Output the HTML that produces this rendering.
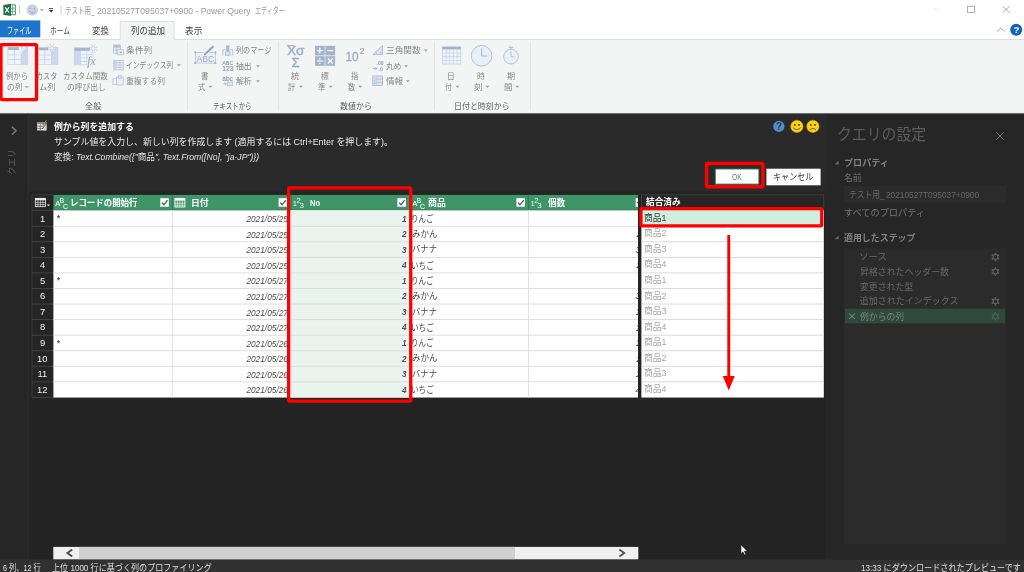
<!DOCTYPE html>
<html lang="ja">
<head>
<meta charset="utf-8">
<title>Power Query エディター</title>
<style>
html,body{margin:0;padding:0;}
body{width:1024px;height:572px;overflow:hidden;background:#242424;position:relative;font-family:"Liberation Sans","Noto Sans CJK JP",sans-serif;}
svg{position:absolute;left:0;top:0;filter:blur(0.3px);}
svg text{font-family:"Liberation Sans","Noto Sans CJK JP",sans-serif;}
.t{position:absolute;white-space:nowrap;line-height:20px;transform-origin:0 0;}
.clip{position:absolute;overflow:hidden;}
#txt{position:absolute;left:0;top:0;width:1024px;height:572px;filter:blur(0.3px);}
</style>
</head>
<body>
<svg id="base" width="1024" height="572" viewBox="0 0 1024 572">
<rect x="0" y="0" width="1024" height="39.5" fill="#ffffff"/>
<rect x="0" y="39" width="1024" height="74.4" fill="#f3f4f4"/>
<rect x="0" y="39" width="1024" height="1" fill="#dcdddd"/>
<rect x="0" y="112.6" width="1024" height="1" fill="#e4e5e5"/>
<rect x="0" y="20.4" width="40.3" height="17" fill="#1c74cb"/>
<path d="M120.2 40 V21.5 H174 V40" fill="#f3f4f4" stroke="#dcdddd" stroke-width="1"/>
<rect x="120.7" y="39" width="52.8" height="1.6" fill="#f3f4f4"/>
<g><rect x="8.5" y="4.8" width="7" height="10" fill="#eef6f1" stroke="#3f8a60" stroke-width="0.8"/><path d="M9 8.2H15.5M9 11.4H15.5M12.6 5V15" stroke="#4f9670" stroke-width="0.7"/><path d="M3.4 5 L11 3.7 V16 L3.4 14.7Z" fill="#1e7145"/><path d="M5.2 7.3 L9 12.5 M9 7.3 L5.2 12.5" stroke="#fff" stroke-width="1.2"/></g>
<rect x="19.2" y="5" width="0.8" height="9.5" fill="#c4c4c4"/>
<circle cx="32.3" cy="10" r="5.7" fill="#c5d3e8"/><circle cx="30.3" cy="8.3" r="0.75" fill="#8ea3c8"/><circle cx="34.3" cy="8.3" r="0.75" fill="#8ea3c8"/><path d="M28.9 10.9 Q32.3 15.2 35.7 10.9" stroke="#8ea3c8" stroke-width="0.9" fill="none"/>
<path d="M40 9 h3.4 l-1.7 1.9z" fill="#9a9a9a"/>
<rect x="49" y="8.2" width="4.2" height="0.9" fill="#333"/><path d="M48.9 10 h4.4 l-2.2 2.4z" fill="#333"/>
<rect x="60.7" y="5" width="0.8" height="9.5" fill="#c4c4c4"/>
<rect x="933.3" y="8.8" width="6.8" height="0.8" fill="#e6e6e6"/>
<rect x="967.5" y="6.3" width="7" height="6.2" fill="none" stroke="#a8a8a8" stroke-width="0.9"/>
<path d="M1002.5 6 L1009.8 12.8 M1009.8 6 L1002.5 12.8" stroke="#a8a8a8" stroke-width="0.9"/>
<path d="M997 31.6 L1000.8 28.2 L1004.6 31.6" stroke="#a0a0a0" stroke-width="0.9" fill="none"/>
<circle cx="1016.2" cy="29.7" r="6" fill="#0f64b6"/>
<text x="1016.3" y="33.2" font-size="9.5" font-weight="bold" fill="#fff" text-anchor="middle">?</text>
<rect x="187.1" y="41.5" width="0.9" height="69" fill="#e2e3e4"/>
<rect x="278.20000000000005" y="41.5" width="0.9" height="69" fill="#e2e3e4"/>
<rect x="433.90000000000003" y="41.5" width="0.9" height="69" fill="#e2e3e4"/>
<rect x="530.0" y="41.5" width="0.9" height="69" fill="#e2e3e4"/>
<rect x="7.9" y="47" width="19.9" height="17.4" fill="#eef3fa"/><rect x="21.17" y="47" width="6.63" height="17.4" fill="#cbd7ea"/><rect x="7.9" y="47" width="11" height="3.0" fill="#a4b3ce"/><rect x="14.13" y="50.0" width="0.8" height="14.399999999999999" fill="#c6d3e7"/><rect x="20.77" y="50.0" width="0.8" height="14.399999999999999" fill="#c6d3e7"/><rect x="7.90" y="54.40" width="13.27" height="0.8" fill="#c6d3e7"/><rect x="7.90" y="59.20" width="13.27" height="0.8" fill="#c6d3e7"/><rect x="7.9" y="47" width="19.9" height="17.4" fill="none" stroke="#c6d3e7" stroke-width="0.7"/>
<path d="M17.6 56.4 L24.6 46.6" stroke="#f3f4f4" stroke-width="2.4"/><path d="M17.8 56 L24.2 47.2" stroke="#dfe6f2" stroke-width="1"/>
<rect x="38.3" y="47.3" width="19.5" height="17.1" fill="#eef3fa"/><rect x="51.30" y="47.3" width="6.50" height="17.1" fill="#cbd7ea"/><rect x="38.3" y="47.3" width="10" height="3.0" fill="#a4b3ce"/><rect x="44.40" y="50.3" width="0.8" height="14.100000000000001" fill="#c6d3e7"/><rect x="50.90" y="50.3" width="0.8" height="14.100000000000001" fill="#c6d3e7"/><rect x="38.30" y="54.60" width="13.00" height="0.8" fill="#c6d3e7"/><rect x="38.30" y="59.30" width="13.00" height="0.8" fill="#c6d3e7"/><rect x="38.3" y="47.3" width="19.5" height="17.1" fill="none" stroke="#c6d3e7" stroke-width="0.7"/>
<circle cx="51.8" cy="48.2" r="3.2" fill="#f3f4f4" opacity="0.8"/><path d="M53.00 48.70 L56.05 49.96" stroke="#c3cfe4" stroke-width="0.8"/><path d="M52.30 49.40 L53.56 52.45" stroke="#c3cfe4" stroke-width="0.8"/><path d="M51.30 49.40 L50.04 52.45" stroke="#c3cfe4" stroke-width="0.8"/><path d="M50.60 48.70 L47.55 49.96" stroke="#c3cfe4" stroke-width="0.8"/><path d="M50.60 47.70 L47.55 46.44" stroke="#c3cfe4" stroke-width="0.8"/><path d="M51.30 47.00 L50.04 43.95" stroke="#c3cfe4" stroke-width="0.8"/><path d="M52.30 47.00 L53.56 43.95" stroke="#c3cfe4" stroke-width="0.8"/><path d="M53.00 47.70 L56.05 46.44" stroke="#c3cfe4" stroke-width="0.8"/><circle cx="51.8" cy="48.2" r="1.6" fill="#f3f4f4" stroke="#c3cfe4" stroke-width="0.5"/>
<rect x="74.2" y="47.8" width="18.8" height="17.1" fill="#eef3fa"/><rect x="74.20" y="47.8" width="6.27" height="17.1" fill="#cbd7ea"/><rect x="74.2" y="47.8" width="16" height="3.0" fill="#a4b3ce"/><rect x="80.07" y="50.8" width="0.8" height="14.100000000000001" fill="#c6d3e7"/><rect x="86.33" y="50.8" width="0.8" height="14.100000000000001" fill="#c6d3e7"/><rect x="80.47" y="53.92" width="12.53" height="0.8" fill="#c6d3e7"/><rect x="80.47" y="57.45" width="12.53" height="0.8" fill="#c6d3e7"/><rect x="80.47" y="60.98" width="12.53" height="0.8" fill="#c6d3e7"/><rect x="74.2" y="47.8" width="18.8" height="17.1" fill="none" stroke="#c6d3e7" stroke-width="0.7"/>
<circle cx="93.3" cy="48.6" r="3.2" fill="#f3f4f4" opacity="0.8"/><path d="M94.50 49.10 L97.55 50.36" stroke="#c3cfe4" stroke-width="0.8"/><path d="M93.80 49.80 L95.06 52.85" stroke="#c3cfe4" stroke-width="0.8"/><path d="M92.80 49.80 L91.54 52.85" stroke="#c3cfe4" stroke-width="0.8"/><path d="M92.10 49.10 L89.05 50.36" stroke="#c3cfe4" stroke-width="0.8"/><path d="M92.10 48.10 L89.05 46.84" stroke="#c3cfe4" stroke-width="0.8"/><path d="M92.80 47.40 L91.54 44.35" stroke="#c3cfe4" stroke-width="0.8"/><path d="M93.80 47.40 L95.06 44.35" stroke="#c3cfe4" stroke-width="0.8"/><path d="M94.50 48.10 L97.55 46.84" stroke="#c3cfe4" stroke-width="0.8"/><circle cx="93.3" cy="48.6" r="1.6" fill="#f3f4f4" stroke="#c3cfe4" stroke-width="0.5"/>
<text x="87.3" y="64.5" font-size="11.5" font-style="italic" fill="#f3f4f4" stroke="#f3f4f4" stroke-width="1.6" style="font-family:'Liberation Serif',serif">fx</text>
<text x="87.3" y="64.5" font-size="11.5" font-style="italic" fill="#8e9dba" style="font-family:'Liberation Serif',serif">fx</text>
<g fill="none" stroke="#b3c0d8" stroke-width="0.8"><rect x="113.6" y="45" width="6.8" height="8.6" fill="#eaf0f8"/><rect x="113.6" y="45" width="6.8" height="2" fill="#b3c0d8" stroke="none"/><path d="M113.6 47.4h6.8M113.6 50.2h6.8M116.4 45v8.6"/><rect x="117.8" y="49.8" width="5.6" height="5" fill="#f3f4f4"/><rect x="119.6" y="51.6" width="2" height="1.6" fill="#8fa0bf" stroke="none"/></g>
<g fill="none" stroke="#b3c0d8" stroke-width="0.7"><rect x="113.6" y="60.3" width="9.6" height="9.6" fill="#eaf0f8"/><path d="M116.6 60.3v9.6M116.6 62.7h6.6M116.6 65.1h6.6M116.6 67.5h6.6M119.9 60.3v9.6"/><rect x="113.6" y="60.3" width="3" height="9.6" fill="#d3dcec" stroke="none"/><path d="M115.1 61v8.4" stroke="#9fb0cd" stroke-width="0.8" stroke-dasharray="0.9 0.9"/></g>
<g fill="none" stroke="#b3c0d8" stroke-width="0.8"><rect x="113" y="78.8" width="5.4" height="5.8" fill="#f3f4f4"/><rect x="116.6" y="77" width="6.6" height="8" fill="#eaf0f8"/><rect x="118.6" y="75.6" width="2.6" height="2.8" fill="#d3dcec" stroke-width="0.6"/></g>
<path d="M24.80 86.20 h4.0 l-2.0 2.1z" fill="#a2a2a2"/>
<path d="M176.90 64.30 h4.0 l-2.0 2.1z" fill="#a2a2a2"/>
<rect x="195.2" y="52.3" width="20.2" height="10.8" fill="#e9eff8" stroke="#a9b8d3" stroke-width="0.6"/>
<rect x="194.29999999999998" y="51.4" width="1.8" height="1.8" fill="#9fb0cd"/>
<rect x="214.5" y="51.4" width="1.8" height="1.8" fill="#9fb0cd"/>
<rect x="194.29999999999998" y="62.2" width="1.8" height="1.8" fill="#9fb0cd"/>
<rect x="214.5" y="62.2" width="1.8" height="1.8" fill="#9fb0cd"/>
<text x="205.3" y="61.6" font-size="9.4" fill="#9dadc9" text-anchor="middle" textLength="17.6" lengthAdjust="spacingAndGlyphs">ABC</text>
<path d="M204.6 54.6 L213.4 46.2" stroke="#f3f4f4" stroke-width="3.6"/><path d="M205 54.2 L213.4 46.2" stroke="#93a3c1" stroke-width="2.1"/><path d="M203.6 55.6 l0.8 -2 l1.3 1.3z" fill="#7f90b0"/>
<path d="M208.40 85.80 h4.0 l-2.0 2.1z" fill="#a2a2a2"/>
<g fill="none" stroke="#a9b8d3" stroke-width="0.8"><path d="M222.9 55.4v-5.6h2.6M232.8 55.4v-5.6h-2.6"/><rect x="226.2" y="45.4" width="3.2" height="6" fill="#a9b8d3" stroke="none"/><rect x="225.6" y="51.7" width="4.4" height="3.6" fill="#dbe4f1"/></g>
<text x="227.8" y="64.6" font-size="5.4" fill="#8b9cbb" text-anchor="middle" stroke="#8b9cbb" stroke-width="0.15">ABC</text><text x="227.8" y="70.9" font-size="6.8" fill="#8b9cbb" text-anchor="middle" stroke="#8b9cbb" stroke-width="0.15">123</text>
<text x="227.6" y="80.8" font-size="6.6" fill="#8b9cbb" text-anchor="middle" stroke="#8b9cbb" stroke-width="0.15">abc</text><path d="M223 83.8h3.2m-1.3-1.3l1.3 1.3l-1.3 1.3" stroke="#8b9cbb" stroke-width="0.7" fill="none"/><rect x="227.4" y="82" width="5.4" height="3.8" fill="#dbe4f1" stroke="#a9b8d3" stroke-width="0.6"/>
<path d="M256.00 65.30 h4.0 l-2.0 2.1z" fill="#a2a2a2"/>
<path d="M256.00 80.30 h4.0 l-2.0 2.1z" fill="#a2a2a2"/>
<text x="295.8" y="54.7" font-size="12" fill="#9aaac7" stroke="#9aaac7" stroke-width="0.35" text-anchor="middle" textLength="17.4" lengthAdjust="spacingAndGlyphs">Xσ</text><rect x="286.8" y="45.2" width="7.6" height="0.9" fill="#9aaac7"/>
<text x="295.5" y="66.5" font-size="13" fill="#9aaac7" stroke="#9aaac7" stroke-width="0.35" text-anchor="middle">Σ</text>
<path d="M299.00 85.80 h4.0 l-2.0 2.1z" fill="#a2a2a2"/>
<rect x="315" y="45.8" width="9.7" height="9.6" fill="#a3b2ce"/>
<path d="M316.85 50.599999999999994h6M319.85 47.599999999999994v6" stroke="#fff" stroke-width="1.2"/>
<rect x="325.4" y="45.8" width="9.7" height="9.6" fill="#a3b2ce"/>
<path d="M327.25 50.599999999999994h6" stroke="#fff" stroke-width="1.2"/>
<rect x="315" y="56.2" width="9.7" height="9.6" fill="#a3b2ce"/>
<path d="M316.85 61.0h6" stroke="#fff" stroke-width="1.1"/><circle cx="319.85" cy="58.8" r="0.8" fill="#fff"/><circle cx="319.85" cy="63.2" r="0.8" fill="#fff"/>
<rect x="325.4" y="56.2" width="9.7" height="9.6" fill="#a3b2ce"/>
<path d="M327.75 58.5l5 5M332.75 58.5l-5 5" stroke="#fff" stroke-width="1.1"/>
<path d="M328.80 85.80 h4.0 l-2.0 2.1z" fill="#a2a2a2"/>
<text x="345.6" y="61.3" font-size="12.6" fill="#9aaac7" stroke="#9aaac7" stroke-width="0.3" textLength="13" lengthAdjust="spacingAndGlyphs">10</text><text x="359.8" y="54.2" font-size="8.6" fill="#9aaac7" stroke="#9aaac7" stroke-width="0.2">2</text>
<path d="M358.20 85.80 h4.0 l-2.0 2.1z" fill="#a2a2a2"/>
<path d="M373 54.6 L382.4 45.6 V54.6Z" fill="#dbe4f1" stroke="#a8b5cd" stroke-width="0.8"/><path d="M377 54.6a4 4 0 0 0 -1.4 -2.6" stroke="#a8b5cd" stroke-width="0.6" fill="none"/><rect x="380" y="52.3" width="2.3" height="2.3" fill="none" stroke="#a8b5cd" stroke-width="0.5"/>
<text x="376.6" y="65.4" font-size="5" font-weight="bold" fill="#8c9dbd">.00</text><text x="378.6" y="70.6" font-size="5" font-weight="bold" fill="#8c9dbd">.0</text><path d="M372.8 68.6h4m-1.5-1.5l1.5 1.5l-1.5 1.5" stroke="#8c9dbd" stroke-width="0.7" fill="none"/>
<g fill="none" stroke="#a8b5cd" stroke-width="0.8"><rect x="372.6" y="76" width="9.8" height="9.4" fill="#dbe4f1"/><path d="M375.8 76v9.4M375.8 79.1h6.6M375.8 82.3h6.6"/><rect x="372.6" y="76" width="3.2" height="9.4" fill="#d3dcec" stroke="none"/><path d="M374.2 77.2v7.4" stroke="#9fb0cd" stroke-width="0.8" stroke-dasharray="1.4 1.4"/></g>
<path d="M423.80 49.60 h4.0 l-2.0 2.1z" fill="#a2a2a2"/>
<path d="M404.00 65.30 h4.0 l-2.0 2.1z" fill="#a2a2a2"/>
<path d="M405.80 80.30 h4.0 l-2.0 2.1z" fill="#a2a2a2"/>
<rect x="442.4" y="46.8" width="18.4" height="17.2" fill="#f0f4fa" stroke="#bccae2" stroke-width="0.7"/><rect x="442.4" y="46.8" width="18.4" height="2.6" fill="#a4b3ce"/>
<rect x="445.73" y="49.4" width="0.7" height="14.6" fill="#c3d0e6"/>
<rect x="449.41" y="49.4" width="0.7" height="14.6" fill="#c3d0e6"/>
<rect x="453.09" y="49.4" width="0.7" height="14.6" fill="#c3d0e6"/>
<rect x="456.77" y="49.4" width="0.7" height="14.6" fill="#c3d0e6"/>
<rect x="442.4" y="52.70" width="18.4" height="0.7" fill="#c3d0e6"/>
<rect x="442.4" y="56.35" width="18.4" height="0.7" fill="#c3d0e6"/>
<rect x="442.4" y="60.00" width="18.4" height="0.7" fill="#c3d0e6"/>
<path d="M455.50 85.80 h4.0 l-2.0 2.1z" fill="#a2a2a2"/>
<circle cx="481.6" cy="55.8" r="10.3" fill="#e8eff9" stroke="#a8b5cd" stroke-width="0.8"/><path d="M481.6 48.6 V56 H487.2" fill="none" stroke="#a8b5cd" stroke-width="1"/>
<path d="M485.40 85.80 h4.0 l-2.0 2.1z" fill="#a2a2a2"/>
<circle cx="511" cy="56.6" r="7.4" fill="#e8eff9" stroke="#a8b5cd" stroke-width="0.8"/><path d="M511 51.4 V56.8 H514.4" fill="none" stroke="#a8b5cd" stroke-width="0.8"/><path d="M508.6 47.2h4.8M511 47.2v2" stroke="#a8b5cd" stroke-width="1.1"/>
<path d="M515.20 85.80 h4.0 l-2.0 2.1z" fill="#a2a2a2"/>
<rect x="0" y="113.5" width="28" height="446" fill="#262626"/>
<rect x="28" y="113.5" width="799" height="78.1" fill="#2a2a2a"/>
<rect x="27.6" y="113.5" width="0.9" height="446" fill="#313131"/>
<path d="M12 126.9 L16 130.7 L12 134.5" stroke="#7a7a7a" stroke-width="1.5" fill="none"/>
<text transform="translate(15.3 175.2) rotate(-90)" font-size="9.4" fill="#606060" textLength="25.8" lengthAdjust="spacingAndGlyphs">クエリ</text>
<rect x="37.2" y="122" width="9.2" height="8.4" fill="#f2f2f2"/><rect x="37.2" y="122" width="9.2" height="2" fill="#8a8a8a"/><path d="M40.2 124v6.4M37.2 126.2h6M37.2 128.4h6" stroke="#555" stroke-width="0.7"/><rect x="43.2" y="124" width="3.2" height="6.4" fill="#c9d6ea"/>
<path d="M45.9 120.3 l-3.4 4.6 h1.9 l-1.9 3.9 l4.3 -5.3 h-2 l2.1 -3.2z" fill="#f3b04a" stroke="#262626" stroke-width="0.4"/>
<circle cx="778.9" cy="126.4" r="5.6" fill="#558ec6"/><text x="778.9" y="130.2" font-size="10.4" font-weight="bold" fill="#1f3a5e" text-anchor="middle">?</text>
<circle cx="796.9" cy="126.4" r="6.2" fill="#fbd017" stroke="#c9a40c" stroke-width="0.5"/><rect x="794" y="124" width="1.6" height="1.8" fill="#5a4700"/><rect x="798.2" y="124" width="1.6" height="1.8" fill="#5a4700"/><path d="M793.2 127.6 Q796.9 131.6 800.6 127.6" stroke="#6a5500" stroke-width="0.9" fill="none"/>
<circle cx="812.9" cy="126.4" r="6.2" fill="#fbd017" stroke="#c9a40c" stroke-width="0.5"/><rect x="810" y="124" width="1.6" height="1.8" fill="#5a4700"/><rect x="814.2" y="124" width="1.6" height="1.8" fill="#5a4700"/><path d="M809.8 130 Q812.9 126.8 816 130" stroke="#6a5500" stroke-width="0.9" fill="none"/>
<rect x="715.3" y="169" width="43.6" height="15.1" fill="#fff" stroke="#347a54" stroke-width="0.9"/>
<rect x="766.4" y="168.7" width="54.2" height="16.6" fill="#fff"/>
<rect x="32" y="194.9" width="21.4" height="202.65" fill="#252525"/>
<rect x="31.6" y="194.9" width="0.8" height="202.65" fill="#404040"/>
<rect x="31.6" y="194.5" width="21.799999999999997" height="0.8" fill="#404040"/>
<rect x="32" y="225.81" width="21.4" height="0.8" fill="#484848"/>
<rect x="32" y="241.38" width="21.4" height="0.8" fill="#484848"/>
<rect x="32" y="256.95" width="21.4" height="0.8" fill="#484848"/>
<rect x="32" y="272.51" width="21.4" height="0.8" fill="#484848"/>
<rect x="32" y="288.08" width="21.4" height="0.8" fill="#484848"/>
<rect x="32" y="303.64" width="21.4" height="0.8" fill="#484848"/>
<rect x="32" y="319.21" width="21.4" height="0.8" fill="#484848"/>
<rect x="32" y="334.77" width="21.4" height="0.8" fill="#484848"/>
<rect x="32" y="350.34" width="21.4" height="0.8" fill="#484848"/>
<rect x="32" y="365.90" width="21.4" height="0.8" fill="#484848"/>
<rect x="32" y="381.47" width="21.4" height="0.8" fill="#484848"/>
<rect x="32" y="397.03" width="21.4" height="0.8" fill="#484848"/>
<rect x="32" y="209.90" width="21.4" height="0.8" fill="#484848"/>
<rect x="35.3" y="198.3" width="10.2" height="8.4" fill="none" stroke="#f0f0f0" stroke-width="0.8"/><rect x="35.3" y="198.3" width="10.2" height="2" fill="#f0f0f0"/><path d="M35.3 202.5h10.2M35.3 204.6h10.2M37.9 198.3v8.4M40.4 198.3v8.4M42.9 198.3v8.4" stroke="#f0f0f0" stroke-width="0.6"/>
<path d="M46.8 204.4 h3.2 l-1.6 1.9z" fill="#f0f0f0"/>
<rect x="53.4" y="194.9" width="584.6" height="15.400000000000006" fill="#3f9568"/>
<rect x="171.8" y="194.9" width="1" height="15.400000000000006" fill="#2f7a53"/>
<rect x="290.7" y="194.9" width="1" height="15.400000000000006" fill="#2f7a53"/>
<rect x="410.5" y="194.9" width="1" height="15.400000000000006" fill="#2f7a53"/>
<rect x="527.9" y="194.9" width="1" height="15.400000000000006" fill="#2f7a53"/>
<rect x="53.4" y="209.4" width="584.6" height="0.9" fill="#37855d"/>
<rect x="53.4" y="210.3" width="584.6" height="187.25" fill="#ffffff"/>
<rect x="291.2" y="210.3" width="119.80000000000001" height="187.25" fill="#e8f4ed"/>
<rect x="53.4" y="225.77" width="584.6" height="0.9" fill="#dadada"/>
<rect x="53.4" y="241.33" width="584.6" height="0.9" fill="#dadada"/>
<rect x="53.4" y="256.90" width="584.6" height="0.9" fill="#dadada"/>
<rect x="53.4" y="272.46" width="584.6" height="0.9" fill="#dadada"/>
<rect x="53.4" y="288.03" width="584.6" height="0.9" fill="#dadada"/>
<rect x="53.4" y="303.59" width="584.6" height="0.9" fill="#dadada"/>
<rect x="53.4" y="319.16" width="584.6" height="0.9" fill="#dadada"/>
<rect x="53.4" y="334.72" width="584.6" height="0.9" fill="#dadada"/>
<rect x="53.4" y="350.29" width="584.6" height="0.9" fill="#dadada"/>
<rect x="53.4" y="365.85" width="584.6" height="0.9" fill="#dadada"/>
<rect x="53.4" y="381.42" width="584.6" height="0.9" fill="#dadada"/>
<rect x="171.85000000000002" y="210.3" width="0.9" height="187.25" fill="#dedede"/>
<rect x="290.75" y="210.3" width="0.9" height="187.25" fill="#dedede"/>
<rect x="410.55" y="210.3" width="0.9" height="187.25" fill="#dedede"/>
<rect x="527.9499999999999" y="210.3" width="0.9" height="187.25" fill="#dedede"/>
<rect x="160.3" y="198.2" width="8.5" height="8.5" fill="#fff"/><path d="M161.9 202.6 l2 2.2 l3.6 -4.6" stroke="#555" stroke-width="1.3" fill="none"/>
<rect x="278.6" y="198.2" width="8.5" height="8.5" fill="#fff"/><path d="M280.20000000000005 202.6 l2 2.2 l3.6 -4.6" stroke="#555" stroke-width="1.3" fill="none"/>
<rect x="397.4" y="198.2" width="8.5" height="8.5" fill="#fff"/><path d="M399.0 202.6 l2 2.2 l3.6 -4.6" stroke="#555" stroke-width="1.3" fill="none"/>
<rect x="516.4" y="198.2" width="8.5" height="8.5" fill="#fff"/><path d="M518.0 202.6 l2 2.2 l3.6 -4.6" stroke="#555" stroke-width="1.3" fill="none"/>
<rect x="635.6" y="198.2" width="2.4" height="8.5" fill="#fff"/><rect x="636.8000000000001" y="201.8" width="1.2" height="1.4" fill="#555"/>
<text x="55.2" y="206.2" font-size="7.6" fill="#f2f9f5" stroke="#f2f9f5" stroke-width="0.12">A</text><text x="59.800000000000004" y="203.2" font-size="6.4" fill="#f2f9f5" stroke="#f2f9f5" stroke-width="0.12">B</text><text x="63.1" y="208.6" font-size="6.8" fill="#f2f9f5" stroke="#f2f9f5" stroke-width="0.12">C</text>
<text x="412.2" y="206.2" font-size="7.6" fill="#f2f9f5" stroke="#f2f9f5" stroke-width="0.12">A</text><text x="416.8" y="203.2" font-size="6.4" fill="#f2f9f5" stroke="#f2f9f5" stroke-width="0.12">B</text><text x="420.09999999999997" y="208.6" font-size="6.8" fill="#f2f9f5" stroke="#f2f9f5" stroke-width="0.12">C</text>
<text x="292.8" y="205.9" font-size="7.8" fill="#e6f2eb">1</text><text x="296.4" y="202.9" font-size="7.6" fill="#e6f2eb">2</text><text x="299.4" y="207.9" font-size="8" fill="#e6f2eb">3</text>
<text x="530.6" y="205.9" font-size="7.8" fill="#e6f2eb">1</text><text x="534.2" y="202.9" font-size="7.6" fill="#e6f2eb">2</text><text x="537.2" y="207.9" font-size="8" fill="#e6f2eb">3</text>
<rect x="174.9" y="198.4" width="10" height="8.6" fill="none" stroke="#fff" stroke-width="0.9"/><rect x="174.9" y="198.4" width="10" height="2.2" fill="#fff"/><path d="M174.9 203.2h10M174.9 205.2h10M177.4 200v7M179.9 200v7M182.4 200v7" stroke="#fff" stroke-width="0.6"/>
<rect x="641.4" y="194.9" width="182.39999999999998" height="14.400000000000006" fill="#262626" stroke="#454545" stroke-width="0.8"/>
<rect x="641.4" y="210.3" width="182.40" height="187.25" fill="#ffffff"/>
<rect x="641.4" y="210.3" width="182.40" height="15.91" fill="#d0eedf"/>
<rect x="641.4" y="225.77" width="182.40" height="0.9" fill="#d6d6d6"/>
<rect x="641.4" y="241.33" width="182.40" height="0.9" fill="#d6d6d6"/>
<rect x="641.4" y="256.90" width="182.40" height="0.9" fill="#d6d6d6"/>
<rect x="641.4" y="272.46" width="182.40" height="0.9" fill="#d6d6d6"/>
<rect x="641.4" y="288.03" width="182.40" height="0.9" fill="#d6d6d6"/>
<rect x="641.4" y="303.59" width="182.40" height="0.9" fill="#d6d6d6"/>
<rect x="641.4" y="319.16" width="182.40" height="0.9" fill="#d6d6d6"/>
<rect x="641.4" y="334.72" width="182.40" height="0.9" fill="#d6d6d6"/>
<rect x="641.4" y="350.29" width="182.40" height="0.9" fill="#d6d6d6"/>
<rect x="641.4" y="365.85" width="182.40" height="0.9" fill="#d6d6d6"/>
<rect x="641.4" y="381.42" width="182.40" height="0.9" fill="#d6d6d6"/>
<rect x="53.3" y="546.9" width="585" height="12.7" fill="#f0f0f0"/>
<rect x="79" y="546.9" width="436" height="12.7" fill="#d0d0d0"/>
<path d="M72.2 549.6 L67.4 553.1 L72.2 556.6" stroke="#4a4a4a" stroke-width="1.9" fill="none"/>
<path d="M619.4 549.6 L624.2 553.1 L619.4 556.6" stroke="#555" stroke-width="1.9" fill="none"/>
<rect x="0" y="559.5" width="1024" height="12.5" fill="#313131"/>
<rect x="826.8" y="113.5" width="197.2" height="445.8" fill="#262626"/><rect x="826.4" y="191.6" width="0.9" height="367.7" fill="#2c2c2c"/>
<path d="M996.2 132.3 L1003.8 139.8 M1003.8 132.3 L996.2 139.8" stroke="#7c7c7c" stroke-width="0.9"/>
<path d="M838.6 160.6 v3.8 h-3.8z" fill="#6a6a6a"/>
<path d="M838.6 235.4 v3.8 h-3.8z" fill="#6a6a6a"/>
<rect x="843.6" y="185.6" width="162.6" height="17" fill="#2b2b2b"/>
<rect x="843.6" y="248.4" width="162.6" height="295.6" fill="#2b2b2b"/>
<rect x="845" y="308.7" width="160.2" height="14.6" fill="#2f4a3c"/>
<path d="M849 313.4 L855 319 M855 313.4 L849 319" stroke="#8a938e" stroke-width="0.9"/>
<circle cx="995.4" cy="256.9" r="2.4" fill="none" stroke="#626262" stroke-width="1.1"/><path d="M997.74 258.25 L999.04 259.00" stroke="#626262" stroke-width="1.5"/><path d="M995.40 259.60 L995.40 261.10" stroke="#626262" stroke-width="1.5"/><path d="M993.06 258.25 L991.76 259.00" stroke="#626262" stroke-width="1.5"/><path d="M993.06 255.55 L991.76 254.80" stroke="#626262" stroke-width="1.5"/><path d="M995.40 254.20 L995.40 252.70" stroke="#626262" stroke-width="1.5"/><path d="M997.74 255.55 L999.04 254.80" stroke="#626262" stroke-width="1.5"/>
<circle cx="995.4" cy="271.6" r="2.4" fill="none" stroke="#626262" stroke-width="1.1"/><path d="M997.74 272.95 L999.04 273.70" stroke="#626262" stroke-width="1.5"/><path d="M995.40 274.30 L995.40 275.80" stroke="#626262" stroke-width="1.5"/><path d="M993.06 272.95 L991.76 273.70" stroke="#626262" stroke-width="1.5"/><path d="M993.06 270.25 L991.76 269.50" stroke="#626262" stroke-width="1.5"/><path d="M995.40 268.90 L995.40 267.40" stroke="#626262" stroke-width="1.5"/><path d="M997.74 270.25 L999.04 269.50" stroke="#626262" stroke-width="1.5"/>
<circle cx="995.4" cy="301.3" r="2.4" fill="none" stroke="#626262" stroke-width="1.1"/><path d="M997.74 302.65 L999.04 303.40" stroke="#626262" stroke-width="1.5"/><path d="M995.40 304.00 L995.40 305.50" stroke="#626262" stroke-width="1.5"/><path d="M993.06 302.65 L991.76 303.40" stroke="#626262" stroke-width="1.5"/><path d="M993.06 299.95 L991.76 299.20" stroke="#626262" stroke-width="1.5"/><path d="M995.40 298.60 L995.40 297.10" stroke="#626262" stroke-width="1.5"/><path d="M997.74 299.95 L999.04 299.20" stroke="#626262" stroke-width="1.5"/>
<circle cx="995.4" cy="316.3" r="2.4" fill="none" stroke="#4d6055" stroke-width="1.1"/><path d="M997.74 317.65 L999.04 318.40" stroke="#4d6055" stroke-width="1.5"/><path d="M995.40 319.00 L995.40 320.50" stroke="#4d6055" stroke-width="1.5"/><path d="M993.06 317.65 L991.76 318.40" stroke="#4d6055" stroke-width="1.5"/><path d="M993.06 314.95 L991.76 314.20" stroke="#4d6055" stroke-width="1.5"/><path d="M995.40 313.60 L995.40 312.10" stroke="#4d6055" stroke-width="1.5"/><path d="M997.74 314.95 L999.04 314.20" stroke="#4d6055" stroke-width="1.5"/>
</svg>
<div id="txt">
<div class="t" style="left:65.40px;top:1.00px;color:#9a9a9a;font-size:9.4px;transform:scaleX(0.695);">テスト用_</div>
<div class="t" style="left:96.60px;top:1.00px;color:#9a9a9a;font-size:9.4px;transform:scaleX(0.914);">20210527T095037+0900 - Power Query</div>
<div class="t" style="left:254.50px;top:1.00px;color:#9a9a9a;font-size:9.4px;transform:scaleX(0.650);">エディター</div>
<div class="t" style="left:6.85px;top:20.80px;color:#ffffff;font-size:9.4px;transform:scaleX(0.649);">ファイル</div>
<div class="t" style="left:50.30px;top:20.80px;color:#444;font-size:9.4px;transform:scaleX(0.721);">ホーム</div>
<div class="t" style="left:91.90px;top:21.30px;color:#444;font-size:9.4px;transform:scaleX(0.895);">変換</div>
<div class="t" style="left:130.50px;top:21.30px;color:#444;font-size:9.4px;transform:scaleX(0.905);">列の追加</div>
<div class="t" style="left:185.00px;top:21.30px;color:#444;font-size:9.4px;transform:scaleX(0.926);">表示</div>
<div class="t" style="left:6.40px;top:66.00px;color:#888888;font-size:8.5px;transform:scaleX(0.864);">例から</div>
<div class="t" style="left:6.70px;top:77.40px;color:#888888;font-size:8.5px;transform:scaleX(0.900);">の列</div>
<div class="t" style="left:35.66px;top:65.50px;color:#888888;font-size:8.5px;transform:scaleX(0.838);">カスタ</div>
<div class="t" style="left:38.70px;top:77.40px;color:#888888;font-size:8.5px;transform:scaleX(0.971);">ム列</div>
<div class="t" style="left:62.93px;top:66.00px;color:#888888;font-size:8.5px;transform:scaleX(0.874);">カスタム関数</div>
<div class="t" style="left:67.00px;top:77.40px;color:#888888;font-size:8.5px;transform:scaleX(0.912);">の呼び出し</div>
<div class="t" style="left:84.60px;top:96.00px;color:#5e5e5e;font-size:8.5px;transform:scaleX(0.965);">全般</div>
<div class="t" style="left:126.00px;top:39.90px;color:#888888;font-size:8.5px;transform:scaleX(1.028);">条件列</div>
<div class="t" style="left:126.00px;top:55.00px;color:#888888;font-size:8.5px;transform:scaleX(0.797);">インデックス列</div>
<div class="t" style="left:126.00px;top:71.00px;color:#888888;font-size:8.5px;transform:scaleX(0.919);">重複する列</div>
<div class="t" style="left:201.20px;top:66.00px;color:#888888;font-size:8.5px;transform:scaleX(0.878);">書</div>
<div class="t" style="left:197.90px;top:77.40px;color:#888888;font-size:8.5px;transform:scaleX(0.878);">式</div>
<div class="t" style="left:236.00px;top:40.30px;color:#888888;font-size:8.5px;transform:scaleX(0.833);">列のマージ</div>
<div class="t" style="left:236.00px;top:56.00px;color:#888888;font-size:8.5px;transform:scaleX(0.924);">抽出</div>
<div class="t" style="left:236.00px;top:71.00px;color:#888888;font-size:8.5px;transform:scaleX(0.924);">解析</div>
<div class="t" style="left:213.00px;top:95.80px;color:#5e5e5e;font-size:8.5px;transform:scaleX(0.760);">テキストから</div>
<div class="t" style="left:291.00px;top:66.00px;color:#888888;font-size:8.5px;transform:scaleX(0.967);">統</div>
<div class="t" style="left:287.80px;top:77.40px;color:#888888;font-size:8.5px;transform:scaleX(0.844);">計</div>
<div class="t" style="left:321.20px;top:66.00px;color:#888888;font-size:8.5px;transform:scaleX(0.911);">標</div>
<div class="t" style="left:317.90px;top:77.40px;color:#888888;font-size:8.5px;transform:scaleX(0.878);">準</div>
<div class="t" style="left:350.90px;top:66.00px;color:#888888;font-size:8.5px;transform:scaleX(0.878);">指</div>
<div class="t" style="left:348.00px;top:77.40px;color:#888888;font-size:8.5px;transform:scaleX(0.844);">数</div>
<div class="t" style="left:385.70px;top:40.30px;color:#888888;font-size:8.5px;transform:scaleX(1.021);">三角関数</div>
<div class="t" style="left:385.70px;top:56.00px;color:#888888;font-size:8.5px;transform:scaleX(0.900);">丸め</div>
<div class="t" style="left:385.70px;top:71.00px;color:#888888;font-size:8.5px;transform:scaleX(1.012);">情報</div>
<div class="t" style="left:340.00px;top:96.00px;color:#5e5e5e;font-size:8.5px;transform:scaleX(0.939);">数値から</div>
<div class="t" style="left:447.49px;top:66.00px;color:#888888;font-size:8.5px;transform:scaleX(0.914);">日</div>
<div class="t" style="left:445.00px;top:77.40px;color:#888888;font-size:8.5px;transform:scaleX(0.800);">付</div>
<div class="t" style="left:477.30px;top:66.00px;color:#888888;font-size:8.5px;transform:scaleX(0.922);">時</div>
<div class="t" style="left:474.20px;top:77.40px;color:#888888;font-size:8.5px;transform:scaleX(1.013);">刻</div>
<div class="t" style="left:506.70px;top:66.00px;color:#888888;font-size:8.5px;transform:scaleX(0.956);">期</div>
<div class="t" style="left:503.80px;top:77.40px;color:#888888;font-size:8.5px;transform:scaleX(0.987);">間</div>
<div class="t" style="left:453.87px;top:96.00px;color:#5e5e5e;font-size:8.5px;transform:scaleX(0.934);">日付と時刻から</div>
<div class="t" style="left:53.70px;top:116.80px;color:#ffffff;font-size:9.0px;font-weight:bold;transform:scaleX(0.985);">例から列を追加する</div>
<div class="t" style="left:53.70px;top:132.30px;color:#e8e8e8;font-size:8.9px;transform:scaleX(1.005);">サンプル値を入力し、新しい列を作成します (適用するには Ctrl+Enter を押します)。</div>
<div class="t" style="left:53.70px;top:146.90px;color:#e4e4e4;font-size:8.9px;transform:scaleX(0.971);">変換: <i>Text.Combine({"</i>商品<i>", Text.From([No], "ja-JP")})</i></div>
<div class="t" style="left:70.32px;top:193.10px;color:#fff;font-size:8.6px;font-weight:bold;transform:scaleX(0.981);">レコードの開始行</div>
<div class="t" style="left:190.57px;top:193.10px;color:#fff;font-size:8.6px;font-weight:bold;transform:scaleX(1.025);">日付</div>
<div class="t" style="left:309.70px;top:194.00px;color:#fff;font-size:8.2px;font-weight:bold;transform:scaleX(0.918);">No</div>
<div class="t" style="left:428.00px;top:193.10px;color:#fff;font-size:8.6px;font-weight:bold;transform:scaleX(1.035);">商品</div>
<div class="t" style="left:547.60px;top:193.10px;color:#fff;font-size:8.6px;font-weight:bold;transform:scaleX(0.994);">個数</div>
<div class="t" style="left:645.80px;top:192.40px;color:#fff;font-size:9.4px;font-weight:bold;transform:scaleX(0.926);">結合済み</div>
<div class="t" style="left:40.10px;top:208.53px;color:#f0f0f0;font-size:9.4px;">1</div>
<div class="t" style="left:56.60px;top:208.03px;color:#4a4a4a;font-size:9px;font-weight:bold;transform:scaleX(0.850);">*</div>
<div class="clip" style="left:240px;top:209.13px;width:51px;height:20px"><div class="t" style="left:6.40px;top:0;color:#4a4a4a;font-size:8.3px;font-style:italic;">2021/05/25</div></div>
<div class="t" style="left:402.25px;top:208.53px;color:#505050;font-size:8.6px;font-weight:bold;font-style:italic;transform:scaleX(0.950);">1</div>
<div class="t" style="left:411.45px;top:208.83px;color:#4a4a4a;font-size:8.8px;transform:scaleX(0.850);">りんご</div>
<div class="t" style="left:644.30px;top:207.73px;color:#333;font-size:9.4px;transform:scaleX(0.938);">商品1</div>
<div class="t" style="left:40.10px;top:224.10px;color:#f0f0f0;font-size:9.4px;">2</div>
<div class="clip" style="left:240px;top:224.70px;width:51px;height:20px"><div class="t" style="left:6.40px;top:0;color:#4a4a4a;font-size:8.3px;font-style:italic;">2021/05/25</div></div>
<div class="t" style="left:402.25px;top:224.10px;color:#505050;font-size:8.6px;font-weight:bold;font-style:italic;transform:scaleX(0.950);">2</div>
<div class="t" style="left:412.30px;top:223.90px;color:#4a4a4a;font-size:8.8px;transform:scaleX(0.965);">みかん</div>
<div class="clip" style="left:630px;top:224.20px;width:7.7999999999999545px;height:20px"><div class="t" style="left:6.60px;top:0;color:#444;font-size:9.2px;font-style:italic;">2</div></div>
<div class="t" style="left:644.30px;top:223.30px;color:#a6a6a6;font-size:9.4px;transform:scaleX(0.938);">商品2</div>
<div class="t" style="left:40.10px;top:239.66px;color:#f0f0f0;font-size:9.4px;">3</div>
<div class="clip" style="left:240px;top:240.26px;width:51px;height:20px"><div class="t" style="left:6.40px;top:0;color:#4a4a4a;font-size:8.3px;font-style:italic;">2021/05/25</div></div>
<div class="t" style="left:402.25px;top:239.66px;color:#505050;font-size:8.6px;font-weight:bold;font-style:italic;transform:scaleX(0.950);">3</div>
<div class="t" style="left:412.30px;top:239.46px;color:#4a4a4a;font-size:8.8px;transform:scaleX(0.950);">バナナ</div>
<div class="clip" style="left:630px;top:239.76px;width:7.7999999999999545px;height:20px"><div class="t" style="left:5.60px;top:0;color:#444;font-size:9.2px;font-style:italic;">3</div></div>
<div class="t" style="left:644.30px;top:238.86px;color:#a6a6a6;font-size:9.4px;transform:scaleX(0.938);">商品3</div>
<div class="t" style="left:40.10px;top:255.23px;color:#f0f0f0;font-size:9.4px;">4</div>
<div class="clip" style="left:240px;top:255.83px;width:51px;height:20px"><div class="t" style="left:6.40px;top:0;color:#4a4a4a;font-size:8.3px;font-style:italic;">2021/05/25</div></div>
<div class="t" style="left:402.25px;top:255.23px;color:#505050;font-size:8.6px;font-weight:bold;font-style:italic;transform:scaleX(0.950);">4</div>
<div class="t" style="left:411.43px;top:255.53px;color:#4a4a4a;font-size:8.8px;transform:scaleX(0.865);">いちご</div>
<div class="clip" style="left:630px;top:255.33px;width:7.7999999999999545px;height:20px"><div class="t" style="left:6.60px;top:0;color:#444;font-size:9.2px;font-style:italic;">2</div></div>
<div class="t" style="left:644.30px;top:254.43px;color:#a6a6a6;font-size:9.4px;transform:scaleX(0.938);">商品4</div>
<div class="t" style="left:40.10px;top:270.79px;color:#f0f0f0;font-size:9.4px;">5</div>
<div class="t" style="left:56.60px;top:270.29px;color:#4a4a4a;font-size:9px;font-weight:bold;transform:scaleX(0.850);">*</div>
<div class="clip" style="left:240px;top:271.39px;width:51px;height:20px"><div class="t" style="left:6.40px;top:0;color:#4a4a4a;font-size:8.3px;font-style:italic;">2021/05/27</div></div>
<div class="t" style="left:402.25px;top:270.79px;color:#505050;font-size:8.6px;font-weight:bold;font-style:italic;transform:scaleX(0.950);">1</div>
<div class="t" style="left:411.45px;top:271.09px;color:#4a4a4a;font-size:8.8px;transform:scaleX(0.850);">りんご</div>
<div class="t" style="left:644.30px;top:269.99px;color:#a6a6a6;font-size:9.4px;transform:scaleX(0.938);">商品1</div>
<div class="t" style="left:40.10px;top:286.36px;color:#f0f0f0;font-size:9.4px;">6</div>
<div class="clip" style="left:240px;top:286.96px;width:51px;height:20px"><div class="t" style="left:6.40px;top:0;color:#4a4a4a;font-size:8.3px;font-style:italic;">2021/05/27</div></div>
<div class="t" style="left:402.25px;top:286.36px;color:#505050;font-size:8.6px;font-weight:bold;font-style:italic;transform:scaleX(0.950);">2</div>
<div class="t" style="left:412.30px;top:286.16px;color:#4a4a4a;font-size:8.8px;transform:scaleX(0.965);">みかん</div>
<div class="clip" style="left:630px;top:286.46px;width:7.7999999999999545px;height:20px"><div class="t" style="left:5.60px;top:0;color:#444;font-size:9.2px;font-style:italic;">3</div></div>
<div class="t" style="left:644.30px;top:285.56px;color:#a6a6a6;font-size:9.4px;transform:scaleX(0.938);">商品2</div>
<div class="t" style="left:40.10px;top:301.92px;color:#f0f0f0;font-size:9.4px;">7</div>
<div class="clip" style="left:240px;top:302.52px;width:51px;height:20px"><div class="t" style="left:6.40px;top:0;color:#4a4a4a;font-size:8.3px;font-style:italic;">2021/05/27</div></div>
<div class="t" style="left:402.25px;top:301.92px;color:#505050;font-size:8.6px;font-weight:bold;font-style:italic;transform:scaleX(0.950);">3</div>
<div class="t" style="left:412.30px;top:301.72px;color:#4a4a4a;font-size:8.8px;transform:scaleX(0.950);">バナナ</div>
<div class="clip" style="left:630px;top:302.02px;width:7.7999999999999545px;height:20px"><div class="t" style="left:5.60px;top:0;color:#444;font-size:9.2px;font-style:italic;">1</div></div>
<div class="t" style="left:644.30px;top:301.12px;color:#a6a6a6;font-size:9.4px;transform:scaleX(0.938);">商品3</div>
<div class="t" style="left:40.10px;top:317.49px;color:#f0f0f0;font-size:9.4px;">8</div>
<div class="clip" style="left:240px;top:318.09px;width:51px;height:20px"><div class="t" style="left:6.40px;top:0;color:#4a4a4a;font-size:8.3px;font-style:italic;">2021/05/27</div></div>
<div class="t" style="left:402.25px;top:317.49px;color:#505050;font-size:8.6px;font-weight:bold;font-style:italic;transform:scaleX(0.950);">4</div>
<div class="t" style="left:411.43px;top:317.79px;color:#4a4a4a;font-size:8.8px;transform:scaleX(0.865);">いちご</div>
<div class="clip" style="left:630px;top:317.59px;width:7.7999999999999545px;height:20px"><div class="t" style="left:5.60px;top:0;color:#444;font-size:9.2px;font-style:italic;">1</div></div>
<div class="t" style="left:644.30px;top:316.69px;color:#a6a6a6;font-size:9.4px;transform:scaleX(0.938);">商品4</div>
<div class="t" style="left:40.10px;top:333.05px;color:#f0f0f0;font-size:9.4px;">9</div>
<div class="t" style="left:56.60px;top:332.55px;color:#4a4a4a;font-size:9px;font-weight:bold;transform:scaleX(0.850);">*</div>
<div class="clip" style="left:240px;top:333.65px;width:51px;height:20px"><div class="t" style="left:6.40px;top:0;color:#4a4a4a;font-size:8.3px;font-style:italic;">2021/05/26</div></div>
<div class="t" style="left:402.25px;top:333.05px;color:#505050;font-size:8.6px;font-weight:bold;font-style:italic;transform:scaleX(0.950);">1</div>
<div class="t" style="left:411.45px;top:333.35px;color:#4a4a4a;font-size:8.8px;transform:scaleX(0.850);">りんご</div>
<div class="clip" style="left:630px;top:333.15px;width:7.7999999999999545px;height:20px"><div class="t" style="left:5.60px;top:0;color:#444;font-size:9.2px;font-style:italic;">1</div></div>
<div class="t" style="left:644.30px;top:332.25px;color:#a6a6a6;font-size:9.4px;transform:scaleX(0.938);">商品1</div>
<div class="t" style="left:37.10px;top:348.62px;color:#f0f0f0;font-size:9.4px;">10</div>
<div class="clip" style="left:240px;top:349.22px;width:51px;height:20px"><div class="t" style="left:6.40px;top:0;color:#4a4a4a;font-size:8.3px;font-style:italic;">2021/05/26</div></div>
<div class="t" style="left:402.25px;top:348.62px;color:#505050;font-size:8.6px;font-weight:bold;font-style:italic;transform:scaleX(0.950);">2</div>
<div class="t" style="left:412.30px;top:348.42px;color:#4a4a4a;font-size:8.8px;transform:scaleX(0.965);">みかん</div>
<div class="clip" style="left:630px;top:348.72px;width:7.7999999999999545px;height:20px"><div class="t" style="left:6.60px;top:0;color:#444;font-size:9.2px;font-style:italic;">2</div></div>
<div class="t" style="left:644.30px;top:347.82px;color:#a6a6a6;font-size:9.4px;transform:scaleX(0.938);">商品2</div>
<div class="t" style="left:37.60px;top:364.18px;color:#f0f0f0;font-size:9.4px;">11</div>
<div class="clip" style="left:240px;top:364.78px;width:51px;height:20px"><div class="t" style="left:6.40px;top:0;color:#4a4a4a;font-size:8.3px;font-style:italic;">2021/05/26</div></div>
<div class="t" style="left:402.25px;top:364.18px;color:#505050;font-size:8.6px;font-weight:bold;font-style:italic;transform:scaleX(0.950);">3</div>
<div class="t" style="left:412.30px;top:363.98px;color:#4a4a4a;font-size:8.8px;transform:scaleX(0.950);">バナナ</div>
<div class="clip" style="left:630px;top:364.28px;width:7.7999999999999545px;height:20px"><div class="t" style="left:5.60px;top:0;color:#444;font-size:9.2px;font-style:italic;">1</div></div>
<div class="t" style="left:644.30px;top:363.38px;color:#a6a6a6;font-size:9.4px;transform:scaleX(0.938);">商品3</div>
<div class="t" style="left:37.10px;top:379.75px;color:#f0f0f0;font-size:9.4px;">12</div>
<div class="clip" style="left:240px;top:380.35px;width:51px;height:20px"><div class="t" style="left:6.40px;top:0;color:#4a4a4a;font-size:8.3px;font-style:italic;">2021/05/26</div></div>
<div class="t" style="left:402.25px;top:379.75px;color:#505050;font-size:8.6px;font-weight:bold;font-style:italic;transform:scaleX(0.950);">4</div>
<div class="t" style="left:411.43px;top:380.05px;color:#4a4a4a;font-size:8.8px;transform:scaleX(0.865);">いちご</div>
<div class="clip" style="left:630px;top:379.85px;width:7.7999999999999545px;height:20px"><div class="t" style="left:5.60px;top:0;color:#444;font-size:9.2px;font-style:italic;">4</div></div>
<div class="t" style="left:644.30px;top:378.95px;color:#a6a6a6;font-size:9.4px;transform:scaleX(0.938);">商品4</div>
<div class="t" style="left:731.90px;top:167.90px;color:#4f846a;font-size:8.2px;transform:scaleX(0.825);">OK</div>
<div class="t" style="left:772.74px;top:166.80px;color:#333;font-size:9.4px;transform:scaleX(0.863);">キャンセル</div>
<div class="t" style="left:836.77px;top:124.50px;color:#5c5c5c;font-size:16px;transform:scaleX(0.928);">クエリの設定</div>
<div class="t" style="left:843.60px;top:153.00px;color:#828282;font-size:9.0px;font-weight:bold;transform:scaleX(1.009);">プロパティ</div>
<div class="t" style="left:843.60px;top:168.10px;color:#727272;font-size:9.0px;transform:scaleX(0.978);">名前</div>
<div class="t" style="left:848.50px;top:184.80px;color:#686868;font-size:9.0px;transform:scaleX(0.864);">テスト用_</div>
<div class="t" style="left:885.80px;top:184.80px;color:#686868;font-size:9.0px;transform:scaleX(0.923);">20210527T095037+0900</div>
<div class="t" style="left:843.60px;top:203.40px;color:#767676;font-size:9.0px;transform:scaleX(1.018);">すべてのプロパティ</div>
<div class="t" style="left:843.60px;top:227.70px;color:#828282;font-size:9.0px;font-weight:bold;transform:scaleX(0.992);">適用したステップ</div>
<div class="t" style="left:858.74px;top:247.30px;color:#6a6a6a;font-size:9.0px;transform:scaleX(1.060);">ソース</div>
<div class="t" style="left:859.80px;top:262.00px;color:#6a6a6a;font-size:9.0px;transform:scaleX(0.989);">昇格されたヘッダー数</div>
<div class="t" style="left:859.80px;top:276.70px;color:#6a6a6a;font-size:9.0px;transform:scaleX(0.985);">変更された型</div>
<div class="t" style="left:859.80px;top:291.40px;color:#6a6a6a;font-size:9.0px;">追加されたインデックス</div>
<div class="t" style="left:859.80px;top:306.50px;color:#7a857f;font-size:9.0px;transform:scaleX(0.982);">例からの列</div>
<div class="t" style="left:2.50px;top:557.80px;color:#e0e0e0;font-size:8.9px;transform:scaleX(0.815);">6 列、12 行</div>
<div class="t" style="left:52.30px;top:557.80px;color:#e0e0e0;font-size:8.9px;transform:scaleX(0.910);">上位 1000 行に基づく列のプロファイリング</div>
<div class="t" style="left:860.50px;top:557.80px;color:#e0e0e0;font-size:8.9px;transform:scaleX(0.914);">13:33 にダウンロードされたプレビューです</div>
</div>
<svg id="over" width="1024" height="572" viewBox="0 0 1024 572">
<rect x="0.95" y="44.55" width="35.60" height="55.10" rx="1.0" ry="1.0" fill="none" stroke="#ff0000" stroke-width="3.3"/>
<rect x="288.65" y="187.85" width="122.10" height="213.35" rx="0.8" ry="0.8" fill="none" stroke="#ff0000" stroke-width="3.3"/>
<rect x="706.60" y="163.50" width="56.30" height="23.20" rx="1.0" ry="1.0" fill="none" stroke="#ff0000" stroke-width="3.4"/>
<rect x="640.95" y="208.55" width="180.80" height="17.30" rx="0.8" ry="0.8" fill="none" stroke="#ff0000" stroke-width="3.3"/>
<rect x="727.3" y="235" width="2.9" height="143" fill="#ff0000"/>
<path d="M722.8 376 H734.7 L728.75 390.6Z" fill="#ff0000"/>
<path d="M740.9 544.7 V553.7 L742.9 551.9 L744.6 555.1 L745.9 554.5 L744.4 551.3 L747.2 550.9 Z" fill="#fff" stroke="#111" stroke-width="0.6"/>
</svg>
</body>
</html>
